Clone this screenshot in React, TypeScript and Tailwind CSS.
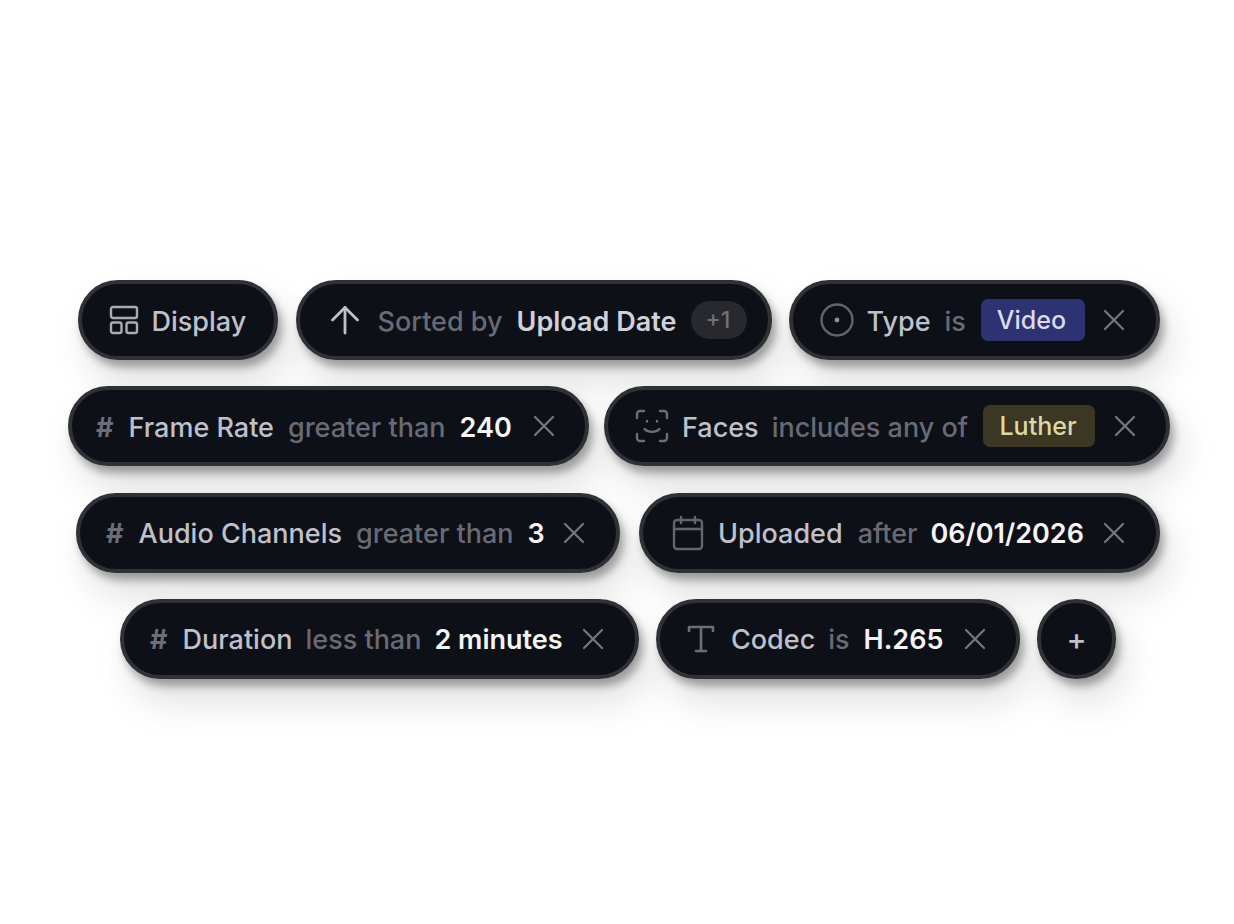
import React from "react";
import { X } from "lucide-react";

function Chip({ children, className = "" }: { children: React.ReactNode; className?: string }) {
  return (
    <div
      className={`flex h-[80px] shrink-0 items-center rounded-full border-[4px] border-[#303137] bg-[#0d1017] shadow-[4px_7px_8px_rgba(0,0,0,0.32),10px_22px_38px_rgba(0,0,0,0.13)] [&>span]:pt-[2px] ${className}`}
    >
      {children}
    </div>
  );
}

function Close({ className = "" }: { className?: string }) {
  return <X className={`h-[36px] w-[36px] shrink-0 text-[#74757d] ${className}`} strokeWidth={1.5} />;
}

function Hash() {
  return <span className="font-bold text-[#6d6e75]">#</span>;
}

function Name({ children }: { children: React.ReactNode }) {
  return <span className="text-[#bfc0ca]">{children}</span>;
}

function Op({ children }: { children: React.ReactNode }) {
  return <span className="text-[#696a73]">{children}</span>;
}

function Value({ children }: { children: React.ReactNode }) {
  return <span className="font-semibold text-[#f4f4f6]">{children}</span>;
}

export default function App() {
  return (
    <div className="min-h-[924px] bg-white pl-[3px] pt-[280px] font-['Inter',sans-serif] text-[27px] font-medium leading-none">
      <div className="flex flex-col items-center gap-[26.3px]">
        {/* Row 1 */}
        <div className="flex gap-[17px]">
          <Chip className="w-[200px] pl-[26px]">
            <svg width="32" height="32" viewBox="0 0 32 32" fill="none" stroke="#a9aab3" strokeWidth="2.4" strokeLinejoin="round" className="shrink-0">
              <rect x="3" y="3" width="26" height="11" rx="2" />
              <rect x="3" y="18.5" width="10.5" height="10.5" rx="2" />
              <rect x="18.5" y="18.5" width="10.5" height="10.5" rx="2" />
            </svg>
            <span className="ml-[12px] text-[#bfc0ca]">Display</span>
          </Chip>
          <Chip className="ml-[1px] w-[476px] pl-[29px]">
            <svg width="32" height="32" viewBox="0 0 32 32" fill="none" stroke="#bfc0ca" strokeWidth="2.8" strokeLinecap="round" strokeLinejoin="round" className="shrink-0">
              <path d="M16 29V3.5" />
              <path d="M3.5 16 16 3.5 28.5 16" />
            </svg>
            <span className="ml-[17px] text-[#696a73]">Sorted by</span>
            <span className="ml-[14px] font-semibold text-[#d0d1da]">Upload Date</span>
            <span className="ml-[15px] flex h-[38px] w-[56px] items-center justify-center rounded-full bg-[#28292f] pt-0! pr-[3px] text-[23px] text-[#6f7078]">+1</span>
          </Chip>
          <Chip className="w-[371px] pl-[26px]">
            <svg width="36" height="36" viewBox="0 0 36 36" fill="none" className="shrink-0">
              <circle cx="18" cy="18" r="15.5" stroke="#63646c" strokeWidth="2.4" />
              <circle cx="18" cy="18" r="2.4" fill="#8e8f97" />
            </svg>
            <span className="ml-[12px]"><Name>Type</Name></span>
            <span className="ml-[14px]"><Op>is</Op></span>
            <span className="ml-[15px] flex h-[42px] w-[104px] items-center justify-center rounded-[7px] bg-[#2d3272] pt-0! pr-[3px] text-[25px] text-[#d9dbee]">Video</span>
            <Close className="ml-[11px]" />
          </Chip>
        </div>
        {/* Row 2 */}
        <div className="ml-[1px] flex gap-[15px]">
          <Chip className="w-[521px] pl-[24px]">
            <Hash />
            <span className="ml-[15px]"><Name>Frame Rate</Name></span>
            <span className="ml-[14px]"><Op>greater than</Op></span>
            <span className="ml-[14px]"><Value>240</Value></span>
            <Close className="ml-[14px]" />
          </Chip>
          <Chip className="w-[566px] pl-[27px]">
            <svg width="34" height="34" viewBox="0 0 34 34" fill="none" stroke="#6d6e75" strokeWidth="2.4" strokeLinecap="round" className="shrink-0">
              <path d="M2 9V5a3 3 0 0 1 3-3h4" />
              <path d="M25 2h4a3 3 0 0 1 3 3v4" />
              <path d="M32 25v4a3 3 0 0 1-3 3h-4" />
              <path d="M9 32H5a3 3 0 0 1-3-3v-4" />
              <path d="M9.5 20c3.5 3.8 11.5 3.8 15 0" />
              <path d="M12 12v.6M22 12v.6" />
            </svg>
            <span className="ml-[13px]"><Name>Faces</Name></span>
            <span className="ml-[13px]"><Op>includes any of</Op></span>
            <span className="ml-[15px] flex h-[42px] w-[112px] items-center justify-center rounded-[7px] bg-[#3b3723] pt-0! pr-[2px] text-[25px] text-[#dcd9a4]">Luther</span>
            <Close className="ml-[12px]" />
          </Chip>
        </div>
        {/* Row 3 */}
        <div className="mr-[1px] flex gap-[19px]">
          <Chip className="w-[544px] pl-[26px]">
            <Hash />
            <span className="ml-[15px]"><Name>Audio Channels</Name></span>
            <span className="ml-[14px]"><Op>greater than</Op></span>
            <span className="ml-[14px]"><Value>3</Value></span>
            <Close className="ml-[11px]" />
          </Chip>
          <Chip className="w-[521px] pl-[28px]">
            <svg width="34" height="36" viewBox="0 0 34 36" fill="none" stroke="#63646c" strokeWidth="2.4" strokeLinecap="round" strokeLinejoin="round" className="shrink-0">
              <rect x="3" y="5" width="28" height="29" rx="3" />
              <path d="M3 14h28" />
              <path d="M10 2v6M24 2v6" />
            </svg>
            <span className="ml-[13px]"><Name>Uploaded</Name></span>
            <span className="ml-[15px]"><Op>after</Op></span>
            <span className="ml-[13px]"><Value>06/01/2026</Value></span>
            <Close className="ml-[12px]" />
          </Chip>
        </div>
        {/* Row 4 */}
        <div className="mr-[1px] flex gap-[17px]">
          <Chip className="w-[519px] pl-[26px]">
            <Hash />
            <span className="ml-[15px]"><Name>Duration</Name></span>
            <span className="ml-[13px]"><Op>less than</Op></span>
            <span className="ml-[13px]"><Value>2 minutes</Value></span>
            <Close className="ml-[12px]" />
          </Chip>
          <Chip className="w-[364px] pl-[27px]">
            <svg width="28" height="28" viewBox="0 0 28 28" fill="none" stroke="#6d6e75" strokeWidth="2.6" strokeLinecap="round" strokeLinejoin="round" className="shrink-0">
              <path d="M2 6V2h24v4" />
              <path d="M14 2v24" />
              <path d="M9 26h10" />
            </svg>
            <span className="ml-[16px]"><Name>Codec</Name></span>
            <span className="ml-[13px]"><Op>is</Op></span>
            <span className="ml-[14px]"><Value>H.265</Value></span>
            <Close className="ml-[14px]" />
          </Chip>
          <Chip className="w-[79px] justify-center">
            <span className="pt-0! text-[30px] text-[#bfc0ca]">+</span>
          </Chip>
        </div>
      </div>
    </div>
  );
}
